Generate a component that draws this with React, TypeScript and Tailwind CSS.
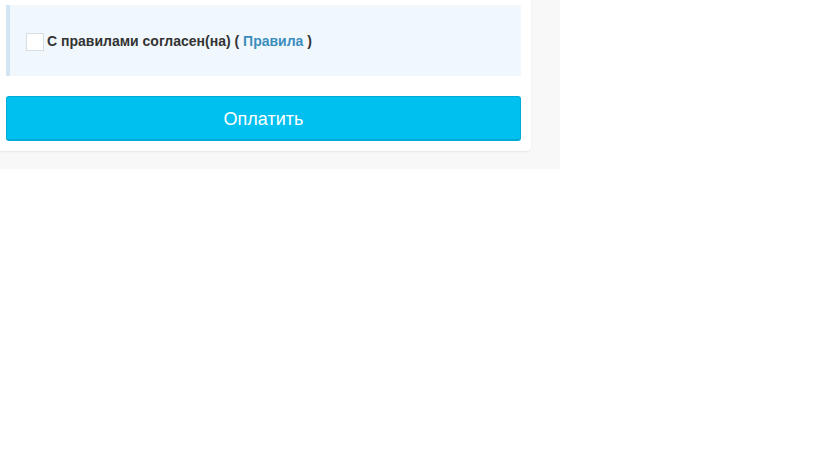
import React from "react";

export default function App() {
  return (
    <div className="w-[560px] bg-[#f8f8f8] pb-[18px]" style={{ fontFamily: '"Liberation Sans", Arial, sans-serif' }}>
      <div className="w-[531px] bg-white rounded-br-[4px] shadow-[0_1px_2px_rgba(0,0,0,0.08)] pt-[5px] pl-[6px] pr-[10px] pb-[10px]">
        <div className="h-[71px] border-l-4 border-[#d3e4f2] bg-[#f0f7fd] flex items-center pl-[16px]">
          <span className="w-[18px] h-[18px] bg-white border border-[#d6dde3] mr-[3px] mt-[2px]"></span>
          <span className="text-[14px] font-bold text-[#333] mt-[1px]">
            С правилами согласен(на) ( <a className="text-[#3c8dbc]">Правила</a> )
          </span>
        </div>
        <button className="mt-[20px] w-full h-[45px] bg-[#00c0ef] border border-[#00acd6] border-b-[2px] rounded-[3px] text-white text-[18px] flex items-center justify-center pt-[2px]">
          Оплатить
        </button>
      </div>
    </div>
  );
}
